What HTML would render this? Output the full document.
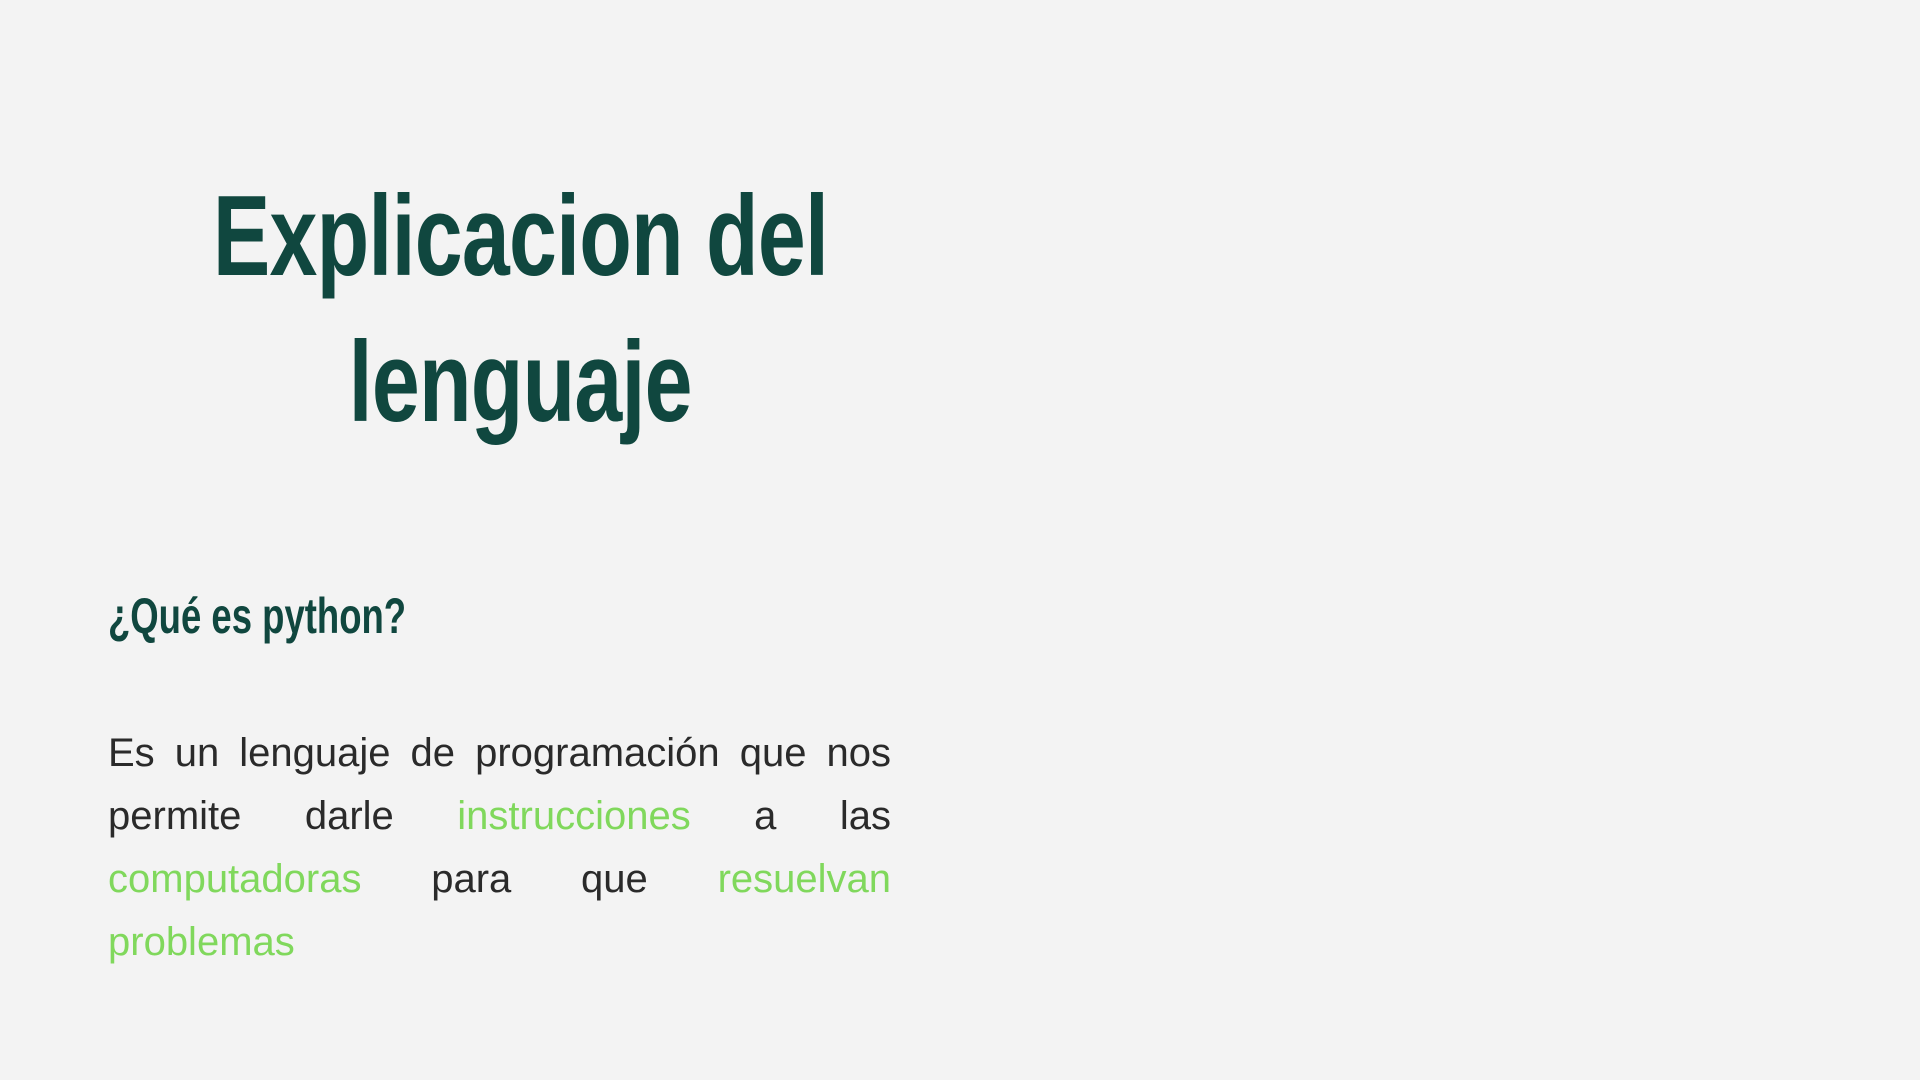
<!DOCTYPE html>
<html><head><meta charset="utf-8"><style>
html,body{margin:0;padding:0;}
body{width:1920px;height:1080px;background:#f3f3f3;position:relative;overflow:hidden;font-family:"Liberation Sans",sans-serif;}
.title{position:absolute;left:0;width:1040px;top:164px;text-align:center;color:#10473f;font-weight:bold;font-size:114px;line-height:146px;}
.title span{display:inline-block;transform:scaleX(0.755);transform-origin:center;white-space:nowrap;letter-spacing:-1px;}
.sub{position:absolute;left:108px;top:586px;color:#10473f;font-weight:bold;font-size:50px;line-height:60px;white-space:nowrap;transform:scaleX(0.73);transform-origin:left center;}
.body{position:absolute;left:108px;top:722px;width:783px;font-size:40px;line-height:63px;color:#2a2a2a;}
.body div{text-align:justify;text-align-last:justify;white-space:nowrap;}
.body div.last{text-align-last:left;}
.g{color:#80d85c;}
</style></head><body>
<div class="title"><span>Explicacion del</span><br><span>lenguaje</span></div>
<div class="sub">¿Qué es python?</div>
<div class="body">
<div>Es un lenguaje de programación que nos</div>
<div>permite darle <span class="g">instrucciones</span> a las</div>
<div><span class="g">computadoras</span> para que <span class="g">resuelvan</span></div>
<div class="last"><span class="g">problemas</span></div>
</div>
</body></html>
